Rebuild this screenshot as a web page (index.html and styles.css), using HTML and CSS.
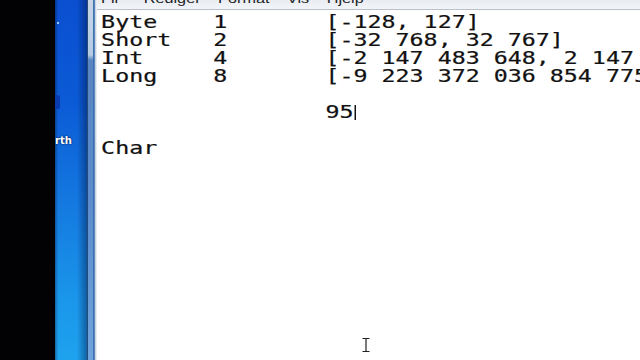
FILE: index.html
```html
<!DOCTYPE html>
<html>
<head>
<meta charset="utf-8">
<link rel="stylesheet" href="styles.css">
</head>
<body>
<div class="screen">
  <div class="black"></div>
  <div class="desk">
    <span class="dot"></span>
    <span class="blob"></span>
    <span class="label">rth</span>
  </div>
  <div class="frame"></div>
  <div class="win">
    <div class="menubar">
      <div class="menus">
        <span class="m1">Fil</span><span class="m2">Rediger</span><span class="m3">Format</span><span class="m4">Vis</span><span class="m5">Hjelp</span>
      </div>
    </div>
    <div class="edit">
<pre class="txt">Byte    1       [-128, 127]
Short   2       [-32 768, 32 767]
Int     4       [-2 147 483 648, 2 147 483 647]
Long    8       [-9 223 372 036 854 775 808, 9 223 372 036 854 775 807]

                95<span class="caret"></span>

Char</pre>
      <svg class="ibeam" width="10" height="16" viewBox="0 0 10 16">
        <path d="M1.5 1.5h2.5M6 1.5h2.5M5 2v12M1.5 14.5h2.5M6 14.5h2.5M4 1.5h2M4 14.5h2" stroke="#222" stroke-width="1.2" fill="none"/>
      </svg>
    </div>
  </div>
</div>
</body>
</html>
```

FILE: styles.css
```css
html, body {
  margin: 0;
  padding: 0;
  width: 640px;
  height: 360px;
  overflow: hidden;
  background: #000;
}
.screen {
  display: flex;
  width: 640px;
  height: 360px;
}
.black {
  width: 55px;
  flex: none;
  background: #020204;
}
.desk {
  width: 32px;
  flex: none;
  position: relative;
  background:
    linear-gradient(to right, rgba(0,0,20,0.35) 0px, rgba(0,0,0,0) 3px, rgba(0,0,0,0) 22px, rgba(0,20,70,0.45) 32px),
    linear-gradient(to bottom, #0a4fd0 0px, #0b5ad6 100px, #1478e0 200px, #1a96ea 300px, #1ea2ee 360px);
}
.dot {
  position: absolute;
  left: 2px;
  top: 22px;
  width: 2px;
  height: 2px;
  background: #9fc4f0;
}
.blob {
  position: absolute;
  left: 0;
  top: 95px;
  width: 5px;
  height: 14px;
  background: #0a3ab0;
  border-radius: 3px;
}
.label {
  position: absolute;
  left: 0;
  top: 135px;
  font-family: "DejaVu Sans", sans-serif;
  font-weight: bold;
  font-size: 10px;
  color: #fff;
  text-shadow: 0 0 2px #002;
}
.frame {
  width: 10px;
  flex: none;
  background:
    linear-gradient(to right,
      #244a78 0px, #244a78 1px,
      rgba(0,0,0,0) 1px, rgba(0,0,0,0) 6px,
      #3e6fae 6px, #3e6fae 7px,
      #5c88c0 7px, #5c88c0 8px,
      #c6d4e2 8px, #c6d4e2 9px,
      #e6ecf2 9px, #e6ecf2 10px),
    linear-gradient(to bottom, #c8d6e6 0px, #b4cbe3 55px, #5a86c2 60px, #5c8ccc 200px, #70a4dc 360px);
}
.win {
  flex: 1;
  display: flex;
  flex-direction: column;
  min-width: 0;
  background: #fff;
}
.menubar {
  height: 9px;
  flex: none;
  overflow: hidden;
  background: linear-gradient(to bottom, #e8ecf2, #f2f4f8);
  border-bottom: 1px solid #b8c0cc;
}
.menus {
  margin-top: -8px;
  transform: scaleX(1.35);
  transform-origin: 0 0;
  font-family: "Liberation Sans", sans-serif;
  font-size: 12px;
  line-height: 14px;
  color: #222;
  white-space: nowrap;
}
.m1 { margin-left: 3px; }
.m2 { margin-left: 19px; }
.m3 { margin-left: 13px; }
.m4 { margin-left: 13px; }
.m5 { margin-left: 13px; }
.edit {
  flex: 1;
  position: relative;
  overflow: hidden;
}
.txt {
  margin: 0;
  padding: 3px 0 0 3px;
  font-family: "DejaVu Sans Mono", monospace;
  font-size: 17px;
  line-height: 18px;
  color: #111;
  white-space: pre;
  transform: scaleX(1.37);
  transform-origin: 0 0;
  -webkit-text-stroke: 0.2px #111;
}
.caret {
  display: inline-block;
  width: 1px;
  height: 15px;
  background: #000;
  vertical-align: -2px;
  margin-left: 1px;
}
.ibeam {
  position: absolute;
  left: 264px;
  top: 327px;
}
```
